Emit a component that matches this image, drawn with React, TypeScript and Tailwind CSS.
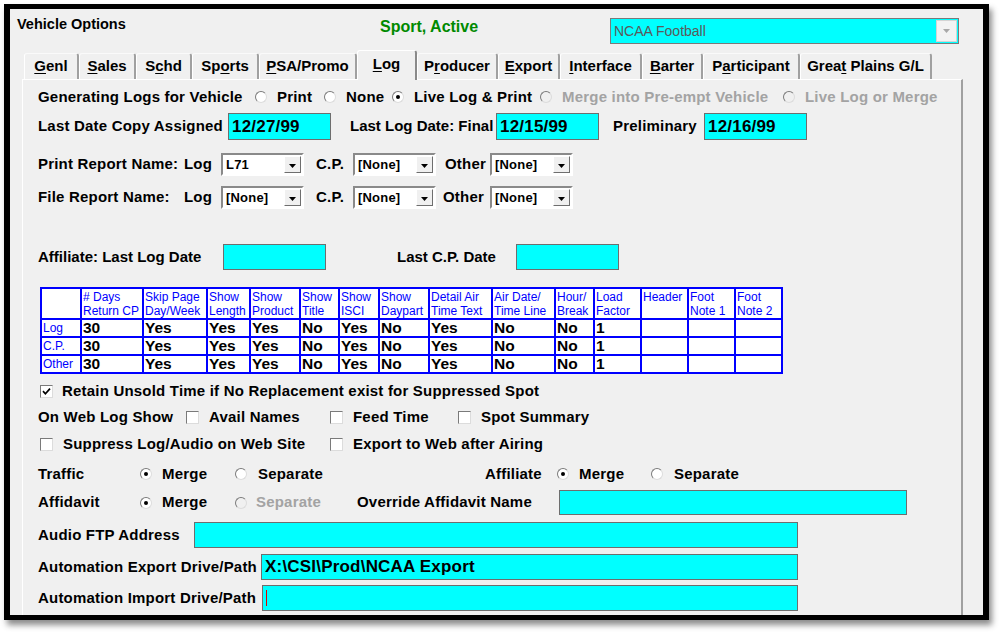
import React from "react";

const FONT = "font-['Liberation_Sans',Arial,sans-serif]";

const tabs = [
  { label: "Genl", u: 0, w: "w-[55px]" },
  { label: "Sales", u: 0, w: "w-[57px]" },
  { label: "Schd", u: 1, w: "w-[56px]" },
  { label: "Sports", u: 2, w: "w-[67px]" },
  { label: "PSA/Promo", u: 0, w: "w-[98px]" },
  { label: "Log", u: 0, w: "w-[60px]", active: true },
  { label: "Producer", u: 1, w: "w-[81px]" },
  { label: "Export", u: 0, w: "w-[62px]" },
  { label: "Interface", u: 0, w: "w-[82px]" },
  { label: "Barter", u: 0, w: "w-[61px]" },
  { label: "Participant", u: 1, w: "w-[97px]" },
  { label: "Great Plains G/L", u: 4, w: "w-[132px]" },
];

const colW = [
  "w-[40px]", "w-[62px]", "w-[64px]", "w-[43px]", "w-[50px]", "w-[39px]", "w-[40px]", "w-[50px]",
  "w-[63px]", "w-[63px]", "w-[39px]", "w-[47px]", "w-[47px]", "w-[47px]", "w-[47px]",
];

const heads = [
  [""], ["# Days", "Return CP"], ["Skip Page", "Day/Week"], ["Show", "Length"], ["Show", "Product"],
  ["Show", "Title"], ["Show", "ISCI"], ["Show", "Daypart"], ["Detail Air", "Time Text"],
  ["Air Date/", "Time Line"], ["Hour/", "Break"], ["Load", "Factor"], ["Header"], ["Foot", "Note 1"], ["Foot", "Note 2"],
];

const rowVals = ["30", "Yes", "Yes", "Yes", "No", "Yes", "No", "Yes", "No", "No", "1", "", "", ""];

function Key({ text, u }: { text: string; u: number }) {
  return (
    <span className="whitespace-pre">
      {text.slice(0, u)}
      <span className="underline underline-offset-2">{text[u]}</span>
      {text.slice(u + 1)}
    </span>
  );
}

function Radio({ checked = false, disabled = false }: { checked?: boolean; disabled?: boolean }) {
  return (
    <span
      className={
        "flex h-[12px] w-[12px] shrink-0 items-center justify-center rounded-full border border-t-[#7a7a7a] border-l-[#7a7a7a] border-r-[#dcdcdc] border-b-[#dcdcdc] " +
        (disabled ? "bg-[#f0f0f0]" : "bg-white")
      }
    >
      {checked && <span className="h-[4px] w-[4px] rounded-full bg-black" />}
    </span>
  );
}

function Check({ checked = false }: { checked?: boolean }) {
  return (
    <span className="flex h-[13px] w-[13px] shrink-0 items-center justify-center border border-t-[#7a7a7a] border-l-[#7a7a7a] border-r-[#dcdcdc] border-b-[#dcdcdc] bg-white">
      {checked && (
        <svg width="9" height="9" viewBox="0 0 9 9">
          <path d="M1 4.2 L3.4 6.8 L8 1.6" stroke="#000" strokeWidth="1.7" fill="none" />
        </svg>
      )}
    </span>
  );
}

function Field({ className, children }: { className: string; children?: React.ReactNode }) {
  return (
    <div className={className + " flex items-center border border-[#6e6e6e] bg-[#00ffff] pl-[3px] text-[17px] font-bold text-black"}>
      {children}
    </div>
  );
}

function Combo({ value }: { value: string }) {
  return (
    <div className="flex h-[23px] w-[83px] shrink-0 border-2 border-t-[#8a8a8a] border-l-[#8a8a8a] border-b-white border-r-white bg-white">
      <div className="flex-1 pl-[3px] text-[13px] font-bold leading-[19px]">{value}</div>
      <div className="my-[1px] mr-[1px] flex w-[17px] items-end justify-center border border-t-white border-l-white border-r-[#6e6e6e] border-b-[#6e6e6e] bg-[#f0f0f0] pb-[4px]">
        <svg width="7" height="4" viewBox="0 0 7 4">
          <path d="M0 0 H7 L3.5 4 Z" fill="#000" />
        </svg>
      </div>
    </div>
  );
}

export default function App() {
  return (
    <div className={"h-[634px] w-[1002px] overflow-hidden bg-white pt-[4px] pl-[4px] text-black " + FONT}>
      <div className="h-[616px] w-[985px] overflow-hidden border-x-[6px] border-y-[5px] border-black bg-[#f0f0f0] shadow-[3px_5px_6px_rgba(0,0,0,0.45)]">
        {/* title bar */}
        <div className="flex h-[41px] items-start whitespace-nowrap">
          <div className="ml-[7px] mt-[7px] w-[363px] text-[14.5px] font-bold leading-[17px]">Vehicle Options</div>
          <div className="mt-[9px] w-[230px] text-[16px] font-bold leading-[18px] text-[#008a00]">Sport, Active</div>
          <div className="mt-[9px] flex h-[26px] w-[349px] border border-[#7a7a7a] bg-[#00ffff] p-[1px]">
            <div className="flex-1 pl-[2px] text-[14px] leading-[22px] text-[#5a5a5a]">NCAA Football</div>
            <div className="flex w-[21px] items-center justify-center border border-[#d4d4d4] bg-[#f3f3f3]">
              <svg width="7" height="4" viewBox="0 0 7 4">
                <path d="M0 0 H7 L3.5 4 Z" fill="#a8a8a8" />
              </svg>
            </div>
          </div>
        </div>

        {/* tabs */}
        <div className="ml-[14px] flex h-[29px] items-end whitespace-nowrap">
          {tabs.map((t) =>
            t.active ? (
              <div
                key={t.label}
                className={t.w + " relative z-10 -mb-px flex h-[30px] items-start justify-center rounded-t-[3px] border-l border-t border-r-2 border-l-white border-t-white border-r-[#8a8a8a] bg-[#f0f0f0] pt-[4px] text-[15px] font-bold leading-[18px]"}
              >
                <Key text={t.label} u={t.u} />
              </div>
            ) : (
              <div
                key={t.label}
                className={t.w + " flex h-[26px] items-start justify-center rounded-t-[3px] border-l border-t border-r-2 border-l-white border-t-[#fafafa] border-r-[#a0a0a0] pt-[3px] text-[15px] font-bold leading-[18px]"}
              >
                <Key text={t.label} u={t.u} />
              </div>
            )
          )}
        </div>

        {/* tab panel */}
        <div className="ml-[12px] h-[540px] w-[941px] whitespace-nowrap border-l border-t border-r-2 border-l-white border-t-white border-r-[#a0a0a0] pl-[15px] text-[15px] font-bold tracking-[0.2px]">
          {/* generating logs */}
          <div className="mt-[7px] flex h-[20px] items-center">
            <div className="w-[217px]">Generating Logs for Vehicle</div>
            <div className="flex w-[69px] items-center gap-[10px]"><Radio />Print</div>
            <div className="flex w-[68px] items-center gap-[10px]"><Radio />None</div>
            <div className="flex w-[148px] items-center gap-[10px]"><Radio checked />Live Log &amp; Print</div>
            <div className="flex w-[243px] items-center gap-[10px] text-[#a3a3a3]"><Radio disabled />Merge into Pre-empt Vehicle</div>
            <div className="flex items-center gap-[10px] text-[#a3a3a3]"><Radio disabled />Live Log or Merge</div>
          </div>

          {/* dates */}
          <div className="mt-[6px] flex h-[27px] items-center">
            <div className="w-[190px]">Last Date Copy Assigned</div>
            <Field className="h-[27px] w-[103px]">12/27/99</Field>
            <div className="ml-[19px] w-[146px] tracking-normal">Last Log Date: Final</div>
            <Field className="h-[27px] w-[103px]">12/15/99</Field>
            <div className="ml-[14px] w-[91px]">Preliminary</div>
            <Field className="h-[27px] w-[103px]">12/16/99</Field>
          </div>

          {/* report names */}
          <div className="mt-[13px] flex h-[23px] items-center">
            <div className="w-[146px]">Print Report Name:</div>
            <div className="w-[37px]">Log</div>
            <Combo value="L71" />
            <div className="ml-[12px] w-[37px]">C.P.</div>
            <Combo value="[None]" />
            <div className="ml-[9px] w-[45px]">Other</div>
            <Combo value="[None]" />
          </div>
          <div className="mt-[10px] flex h-[23px] items-center">
            <div className="w-[146px]">File Report Name:</div>
            <div className="w-[37px]">Log</div>
            <Combo value="[None]" />
            <div className="ml-[12px] w-[37px]">C.P.</div>
            <Combo value="[None]" />
            <div className="ml-[7px] w-[47px]">Other</div>
            <Combo value="[None]" />
          </div>

          {/* affiliate */}
          <div className="mt-[35px] flex h-[26px] items-center tracking-normal">
            <div className="w-[185px]">Affiliate: Last Log Date</div>
            <div className="h-[26px] w-[103px] border border-[#6e6e6e] bg-[#00ffff]" />
            <div className="ml-[71px] w-[119px]">Last C.P. Date</div>
            <div className="h-[26px] w-[103px] border border-[#6e6e6e] bg-[#00ffff]" />
          </div>

          {/* log option grid */}
          <table className="mt-[17px] ml-[2px] w-[741px] table-fixed border-collapse border-2 border-[#0000ff] bg-white tracking-normal">
            <colgroup>
              {colW.map((c, i) => (
                <col key={i} className={c} />
              ))}
            </colgroup>
            <thead>
              <tr className="h-[31px]">
                {heads.map((h, i) => (
                  <th key={i} className="border-2 border-[#0000ff] p-0 pl-[1px] pt-[1px] text-left align-top text-[12px] font-normal leading-[14px] whitespace-nowrap text-[#0000ff]">
                    {h.map((l) => (
                      <div key={l}>{l}</div>
                    ))}
                  </th>
                ))}
              </tr>
            </thead>
            <tbody>
              {["Log", "C.P.", "Other"].map((r) => (
                <tr key={r} className="h-[18px]">
                  <td className="border-2 border-[#0000ff] p-0 pl-[1px] text-[12px] font-normal leading-[14px] text-[#0000ff]">{r}</td>
                  {rowVals.map((v, i) => (
                    <td key={i} className="border-2 border-[#0000ff] p-0 pl-[1px] text-[15.5px] font-bold leading-[14px]">
                      {v}
                    </td>
                  ))}
                </tr>
              ))}
            </tbody>
          </table>

          {/* check options */}
          <div className="mt-[8px] ml-[2px] flex h-[18px] items-center gap-[9px]">
            <Check checked />
            Retain Unsold Time if No Replacement exist for Suppressed Spot
          </div>
          <div className="mt-[8px] flex h-[18px] items-center">
            <div className="w-[148px]">On Web Log Show</div>
            <div className="flex w-[144px] items-center gap-[10px]"><Check />Avail Names</div>
            <div className="flex w-[128px] items-center gap-[10px]"><Check />Feed Time</div>
            <div className="flex items-center gap-[10px]"><Check />Spot Summary</div>
          </div>
          <div className="mt-[9px] ml-[2px] flex h-[18px] items-center">
            <div className="flex w-[290px] items-center gap-[10px]"><Check />Suppress Log/Audio on Web Site</div>
            <div className="flex items-center gap-[10px]"><Check />Export to Web after Airing</div>
          </div>

          {/* merge / separate */}
          <div className="mt-[12px] flex h-[18px] items-center">
            <div className="w-[102px]">Traffic</div>
            <div className="flex w-[95px] items-center gap-[10px]"><Radio checked />Merge</div>
            <div className="flex w-[250px] items-center gap-[11px]"><Radio />Separate</div>
            <div className="w-[72px]">Affiliate</div>
            <div className="flex w-[94px] items-center gap-[10px]"><Radio checked />Merge</div>
            <div className="flex items-center gap-[11px]"><Radio />Separate</div>
          </div>
          <div className="mt-[7px] flex h-[25px] items-center">
            <div className="w-[102px]">Affidavit</div>
            <div className="flex w-[95px] items-center gap-[10px]"><Radio checked />Merge</div>
            <div className="flex w-[122px] items-center gap-[9px] text-[#a3a3a3]"><Radio disabled />Separate</div>
            <div className="w-[202px]">Override Affidavit Name</div>
            <div className="h-[25px] w-[348px] border border-[#6e6e6e] bg-[#00ffff]" />
          </div>

          {/* paths */}
          <div className="mt-[7px] flex h-[26px] items-center">
            <div className="w-[156px]">Audio FTP Address</div>
            <div className="h-[26px] w-[604px] border border-[#6e6e6e] bg-[#00ffff]" />
          </div>
          <div className="mt-[6px] flex h-[26px] items-center">
            <div className="w-[223px]">Automation Export Drive/Path</div>
            <Field className="h-[26px] w-[537px]">X:\CSI\Prod\NCAA Export</Field>
          </div>
          <div className="mt-[5px] flex h-[26px] items-center">
            <div className="w-[224px]">Automation Import Drive/Path</div>
            <Field className="h-[26px] w-[536px]">
              <span className="h-[16px] w-[1px] bg-[#e00000]" />
            </Field>
          </div>
        </div>
      </div>
    </div>
  );
}
